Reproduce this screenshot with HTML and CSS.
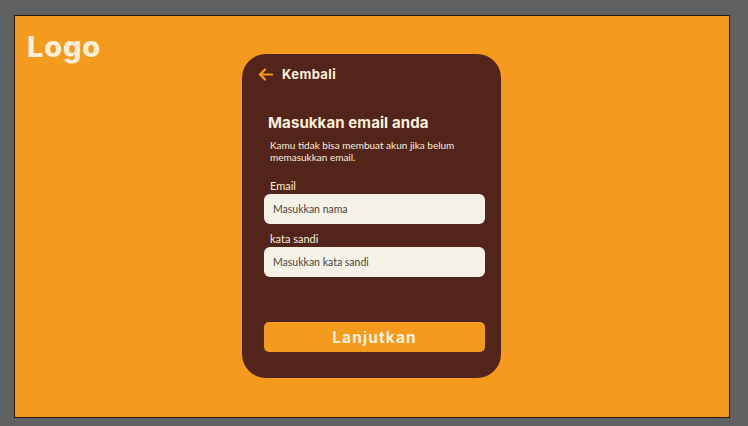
FILE: index.html
```html
<!DOCTYPE html>
<html lang="id">
<head>
<meta charset="utf-8">
<link rel="stylesheet" href="styles.css">
</head>
<body>
<div class="frame">
  <div class="logo-col"><div class="logo">Logo</div></div>
  <div class="card">
    <div class="back">
      <svg class="arrow" width="15" height="13" viewBox="0 0 15 13"><path d="M14 6.5H2M7 1.5L2 6.5L7 11.5" fill="none" stroke="#F49A1C" stroke-width="2.2" stroke-linecap="round" stroke-linejoin="round"/></svg>
      <span class="back-text">Kembali</span>
    </div>
    <div class="intro">
      <h1 class="title">Masukkan email anda</h1>
      <p class="desc">Kamu tidak bisa membuat akun jika belum memasukkan email.</p>
    </div>
    <div class="field">
      <label class="label">Email</label>
      <div class="input">Masukkan nama</div>
    </div>
    <div class="field">
      <label class="label">kata sandi</label>
      <div class="input">Masukkan kata sandi</div>
    </div>
    <div class="btn">Lanjutkan</div>
  </div>
</div>
</body>
</html>
```
FILE: styles.css
```css
html, body { margin: 0; padding: 0; }
body {
  background: #616161;
  width: 748px;
  height: 426px;
  overflow: hidden;
  font-family: "Lato", "Open Sans", sans-serif;
}
.frame {
  box-sizing: border-box;
  margin: 15px 0 0 14px;
  width: 716px;
  height: 403px;
  background: #F49A1C;
  border: 1px solid #2a1a0e;
  padding-top: 12px;
  display: grid;
  grid-template-columns: 227px 259px;
  align-items: start;
}
.logo {
  font-family: "Inter", sans-serif;
  font-weight: 800;
  font-size: 29px;
  line-height: 36px;
  color: #FBEFD9;
  padding-left: 12px;
  padding-top: 1px;
  letter-spacing: 0.8px;
}
.card {
  margin-top: 26px;
  height: 324px;
  box-sizing: border-box;
  background: #52241A;
  border-radius: 24px;
  padding: 12px 16px 0 22px;
  display: flex;
  flex-direction: column;
}
.back {
  display: flex;
  align-items: center;
  gap: 9px;
  margin-left: -6px;
  height: 16px;
}
.arrow { display: block; }
.back-text {
  font-family: "Inter", sans-serif;
  font-weight: 700;
  font-size: 13px;
  letter-spacing: 0.4px;
  color: #FBEFD9;
}
.intro { padding-left: 4px; margin-top: 31px; }
.title {
  margin: 0;
  font-family: "Inter", sans-serif;
  font-weight: 700;
  font-size: 15px;
  line-height: 20px;
  letter-spacing: 0.1px;
  color: #FBEFD9;
}
.desc {
  margin: 6px 0 0 2px;
  font-size: 10px;
  line-height: 12px;
  color: #FBEFD9;
  width: 200px;
}
.field { display: flex; flex-direction: column; margin-top: 16px; }
.field + .field { margin-top: 8px; }
.label {
  font-size: 11px;
  line-height: 14px;
  color: #FBEFD9;
  padding-left: 6px;
  margin-bottom: 1px;
}
.input {
  height: 30px;
  box-sizing: border-box;
  background: #F5F1E6;
  border-radius: 6px;
  padding-left: 9px;
  display: flex;
  align-items: center;
  font-size: 10.5px;
  color: #4a4540;
}
.btn {
  margin-top: 45px;
  height: 30px;
  border-radius: 5px;
  background: #F49A1C;
  color: #FBEFD9;
  display: flex;
  align-items: center;
  justify-content: center;
  font-family: "Inter", sans-serif;
  font-weight: 700;
  font-size: 15.5px;
  letter-spacing: 1.1px;
}
```
